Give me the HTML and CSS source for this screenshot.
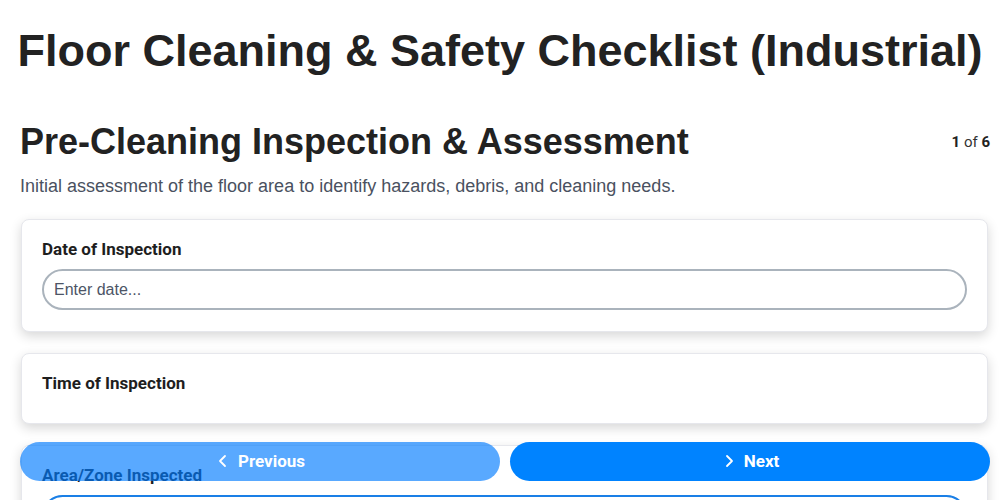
FILE: index.html
```html
<!DOCTYPE html>
<html lang="en">
<head>
<meta charset="utf-8">
<title>Floor Cleaning &amp; Safety Checklist (Industrial)</title>
<link rel="stylesheet" href="styles.css">
</head>
<body>
<div class="page">
  <h1 class="title">Floor Cleaning &amp; Safety Checklist (Industrial)</h1>
  <div class="section-head">
    <h2 class="section-title">Pre-Cleaning Inspection &amp; Assessment</h2>
    <div class="step"><b>1</b> of <b>6</b></div>
  </div>
  <p class="section-desc">Initial assessment of the floor area to identify hazards, debris, and cleaning needs.</p>
  <div class="fields">
    <div class="card">
      <label class="label">Date of Inspection</label>
      <input class="input" type="text" placeholder="Enter date...">
    </div>
    <div class="card card-empty">
      <label class="label">Time of Inspection</label>
    </div>
    <div class="card">
      <label class="label">Area/Zone Inspected</label>
      <input class="input input-focus" type="text" placeholder="Enter area...">
    </div>
  </div>
</div>
<nav class="nav">
  <button class="btn btn-prev" disabled>
    <svg class="chev" viewBox="0 0 16 16" width="16" height="16"><path d="M10 3 L5 8 L10 13" fill="none" stroke="currentColor" stroke-width="1.8" stroke-linecap="round" stroke-linejoin="round"/></svg>
    Previous
  </button>
  <button class="btn btn-next">
    <svg class="chev" viewBox="0 0 16 16" width="16" height="16"><path d="M6 3 L11 8 L6 13" fill="none" stroke="currentColor" stroke-width="1.8" stroke-linecap="round" stroke-linejoin="round"/></svg>
    Next
  </button>
</nav>
</body>
</html>
```
FILE: styles.css
```css
* { box-sizing: border-box; }
html, body { margin: 0; padding: 0; background: #ffffff; }
body {
  font-family: "Liberation Sans", Arial, sans-serif;
  color: #222222;
  overflow: hidden;
  height: 500px;
}
.page {
  padding: 0 10px 0 20px;
}
.title {
  margin: 24px 0 0 -10px;
  font-size: 45px;
  line-height: 54px;
  font-weight: bold;
  text-align: center;
  white-space: nowrap;
  color: #222222;
}
.section-head {
  margin-top: 42px;
  display: flex;
  justify-content: space-between;
  align-items: center;
}
.section-title {
  margin: 0;
  font-size: 36px;
  line-height: 44px;
  font-weight: bold;
  color: #222222;
}
.step {
  font-family: Roboto, "Liberation Sans", sans-serif;
  font-size: 15px;
  color: #333333;
}
.step b { color: #222222; }
.section-desc {
  margin: 10px 0 0 0;
  font-size: 18px;
  line-height: 24px;
  color: #4a5160;
}
.fields {
  margin-top: 21px;
  display: flex;
  flex-direction: column;
  gap: 21px;
  padding-right: 2px;
  padding-left: 1px;
}
.card {
  background: #ffffff;
  border: 1px solid #e6e7ec;
  border-radius: 8px;
  box-shadow: 0 4px 12px rgba(0, 0, 0, 0.16);
  padding: 19px 20px 21px 20px;
  display: flex;
  flex-direction: column;
}
.card-empty { padding-bottom: 30px; }
.label {
  font-family: Roboto, "Liberation Sans", sans-serif;
  font-weight: bold;
  font-size: 17px;
  line-height: 20px;
  color: #1e1e1e;
}
.input {
  margin-top: 10px;
  height: 41px;
  border: 2px solid #aab3bc;
  border-radius: 21px;
  padding: 0 10px;
  font-family: "Liberation Sans", Arial, sans-serif;
  font-size: 16px;
  color: #222222;
  background: #ffffff;
  outline: none;
}
.input::placeholder { color: #4d5566; }
.input-focus { border-color: #1a7fe6; }
.nav {
  position: fixed;
  left: 20px;
  right: 10px;
  bottom: 19px;
  display: flex;
  gap: 10px;
}
.btn {
  flex: 1;
  height: 39px;
  border: none;
  border-radius: 20px;
  background: #007bff;
  color: #ffffff;
  font-family: Roboto, "Liberation Sans", sans-serif;
  font-weight: bold;
  font-size: 17px;
  line-height: 20px;
  padding: 0 0 1px 0;
  display: flex;
  align-items: center;
  justify-content: center;
  gap: 7px;
}
.btn-next { background: #0083ff; }
.btn-prev { opacity: 0.65; }
.chev { display: block; }
```
